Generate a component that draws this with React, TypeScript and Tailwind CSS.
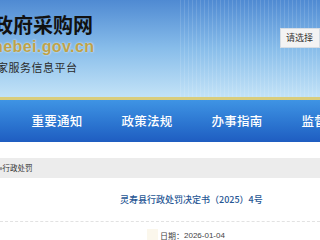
import React from 'react';

const navItems = ['重要通知', '政策法规', '办事指南', '监督检查'];

const cjk = "font-['Noto_Sans_CJK_SC','Noto_Sans',sans-serif]";

const App: React.FC = () => {
  return (
    <div className={`w-[320px] h-[240px] overflow-hidden bg-white ${cjk}`}>
      {/* 顶部横幅 */}
      <div className="relative h-[97px] bg-gradient-to-b from-[#4f8ad2] via-[#88bdea] to-[#c3e3f7] flex justify-between overflow-hidden">
        <div className="absolute inset-y-0 right-0 w-[140px] bg-[repeating-linear-gradient(90deg,rgba(255,255,255,0.12)_0px,rgba(255,255,255,0.12)_1px,transparent_1px,transparent_4px)]" />
        <div className="relative flex flex-col pt-[13px]">
          <div className="ml-[-67px] text-[20px] leading-[24px] font-bold text-[#111] whitespace-nowrap">
            河北省政府采购网
          </div>
          <div className="ml-[-7px] mt-[1px] text-[16px] leading-[18px] font-bold tracking-[0.4px] text-[#bda24a] font-['Liberation_Sans',Arial,sans-serif] [text-shadow:0_0_2px_#f4f8fb] whitespace-nowrap">
            hebei.gov.cn
          </div>
          <div className="ml-[-3px] mt-[4px] text-[11px] leading-[14px] tracking-[0.5px] text-[#2a2a2a] whitespace-nowrap">
            家服务信息平台
          </div>
        </div>
        <div className="relative mt-[28px] h-[20px] w-[40px] shrink-0 bg-[#f3f3f3] border border-[#d6dde4] pl-[5px] text-[9px] leading-[18px] text-[#333] whitespace-nowrap">
          请选择
        </div>
      </div>
      <div className="h-[3px] bg-[#d9cd7c]" />

      {/* 导航 */}
      <div className="h-[42px] bg-gradient-to-b from-[#3f94e4] to-[#1f5dc1] flex items-center pl-[12px] overflow-hidden">
        {navItems.map((item) => (
          <div key={item} className="w-[90px] shrink-0 text-center text-[12.5px] font-medium tracking-[0.3px] text-white">
            {item}
          </div>
        ))}
      </div>

      <div className="h-[16px]" />

      {/* 面包屑 */}
      <div className="h-[20px] bg-[#ececec] flex items-center">
        <span className="ml-[-1px] text-[7.5px] text-[#333] whitespace-nowrap">»行政处罚</span>
      </div>

      {/* 正文标题 */}
      <div className="pt-[16px] pl-[120px] text-[9px] leading-[12px] font-medium text-[#265694] whitespace-nowrap">
        灵寿县行政处罚决定书（2025）4号
      </div>
      <div className="mt-[15px] border-t border-dashed border-[#e2e2e2]" />
      <div className="flex items-center mt-[7px] pl-[147px]">
        <div className="w-[11px] h-[14px] bg-[#fbf7ec] mr-[2px]" />
        <span className="text-[8px] text-[#444]">日期：</span>
        <span className="text-[8px] text-[#444] font-['Liberation_Sans',Arial,sans-serif]">2026-01-04</span>
      </div>
    </div>
  );
};

export default App;
